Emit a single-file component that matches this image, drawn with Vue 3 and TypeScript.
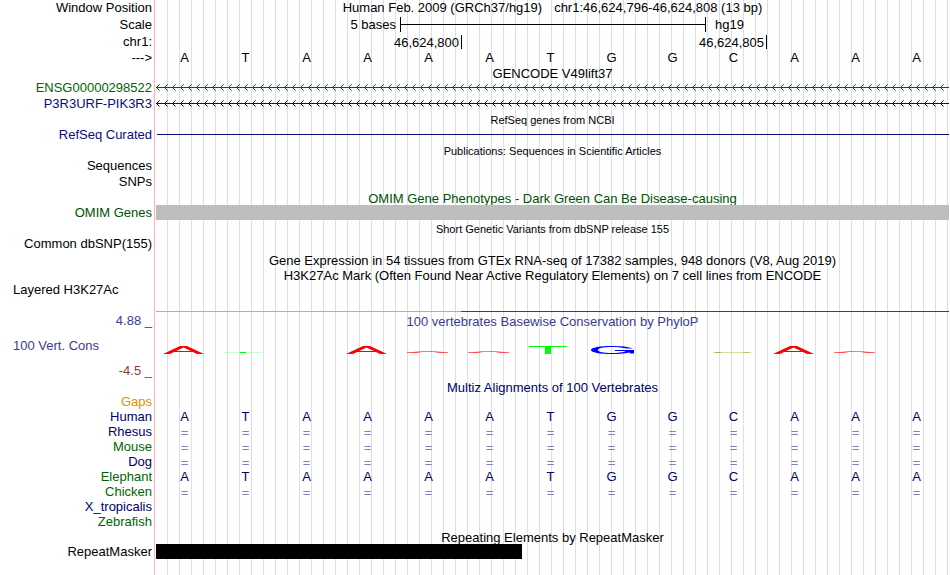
<script setup lang="ts">
type Glyph = 'tall-a' | 'low-a' | 'flat-t' | 'tall-t' | 'tall-g' | 'flat-c' | ''

interface Row {
  kind: 'title' | 'empty' | 'gene' | 'line' | 'bar' | 'bases' | 'logo' | 'divider' | 'repeat'
  size: string
  label?: string
  tone?: string
  left?: boolean
  text?: string
  small?: boolean
  bases?: string
}

const sequence = 'ATAAAATGGCAAA'
const same = '============='

const rows: Row[] = [
  { kind: 'bases', size: 'h15', label: '--->', bases: sequence },
  { kind: 'title', size: 'h15', text: 'GENCODE V49lift37' },
  { kind: 'gene', size: 'h16', label: 'ENSG00000298522', tone: 'green' },
  { kind: 'gene', size: 'h16', label: 'P3R3URF-PIK3R3', tone: 'navy' },
  { kind: 'title', size: 'h15', text: 'RefSeq genes from NCBI', small: true },
  { kind: 'line', size: 'h16', label: 'RefSeq Curated', tone: 'navy' },
  { kind: 'title', size: 'h15', text: 'Publications: Sequences in Scientific Articles', small: true },
  { kind: 'empty', size: 'h16', label: 'Sequences' },
  { kind: 'empty', size: 'h16', label: 'SNPs' },
  { kind: 'title', size: 'h15', text: 'OMIM Gene Phenotypes - Dark Green Can Be Disease-causing', tone: 'forest' },
  { kind: 'bar', size: 'h15', label: 'OMIM Genes', tone: 'forest' },
  { kind: 'title', size: 'h16', text: 'Short Genetic Variants from dbSNP release 155', small: true },
  { kind: 'empty', size: 'h16', label: 'Common dbSNP(155)' },
  { kind: 'title', size: 'h15', text: 'Gene Expression in 54 tissues from GTEx RNA-seq of 17382 samples, 948 donors (V8, Aug 2019)' },
  { kind: 'title', size: 'h15', text: 'H3K27Ac Mark (Often Found Near Active Regulatory Elements) on 7 cell lines from ENCODE' },
  { kind: 'empty', size: 'h15', label: 'Layered H3K27Ac', left: true },
  { kind: 'divider', size: 'h16' },
  { kind: 'title', size: 'h16', label: '4.88 _', tone: 'slate', text: '100 vertebrates Basewise Conservation by PhyloP' },
  { kind: 'logo', size: 'h25', label: '100 Vert. Cons', tone: 'slate', left: true },
  { kind: 'empty', size: 'h25', label: '-4.5 _', tone: 'maroon' },
  { kind: 'title', size: 'h15', text: 'Multiz Alignments of 100 Vertebrates', tone: 'deep' },
  { kind: 'empty', size: 'h15', label: 'Gaps', tone: 'orange' },
  { kind: 'bases', size: 'h15', label: 'Human', tone: 'deep', bases: sequence },
  { kind: 'bases', size: 'h15', label: 'Rhesus', tone: 'deep', bases: same },
  { kind: 'bases', size: 'h15', label: 'Mouse', tone: 'leaf', bases: same },
  { kind: 'bases', size: 'h15', label: 'Dog', tone: 'deep', bases: same },
  { kind: 'bases', size: 'h15', label: 'Elephant', tone: 'leaf', bases: sequence },
  { kind: 'bases', size: 'h15', label: 'Chicken', tone: 'leaf', bases: same },
  { kind: 'empty', size: 'h15', label: 'X_tropicalis', tone: 'deep' },
  { kind: 'empty', size: 'h15', label: 'Zebrafish', tone: 'leaf' },
  { kind: 'title', size: 'h15', text: 'Repeating Elements by RepeatMasker' },
  { kind: 'repeat', size: 'h15', label: 'RepeatMasker' },
]

const logo: Glyph[] = [
  'tall-a', 'flat-t', '', 'tall-a', 'low-a', 'low-a', 'tall-t', 'tall-g', '', 'flat-c', 'tall-a', 'low-a', '',
]
</script>

<template>
  <main class="browser">
    <div class="row h16">
      <span class="label">Window Position</span>
      <div class="title position">
        <span>Human Feb. 2009 (GRCh37/hg19)</span>
        <span>chr1:46,624,796-46,624,808 (13 bp)</span>
      </div>
    </div>
    <div class="row h17">
      <span class="label">Scale</span>
      <div class="columns">
        <span class="scale-text">5 bases</span>
        <span class="scale-bar"></span>
        <span class="assembly">hg19</span>
      </div>
    </div>
    <div class="row h17">
      <span class="label">chr1:</span>
      <div class="columns">
        <span class="mark first">46,624,800</span>
        <span class="mark">46,624,805</span>
      </div>
    </div>

    <div v-for="(row, i) in rows" :key="i" class="row" :class="row.size">
      <span class="label" :class="[row.tone, { left: row.left }]">{{ row.label }}</span>

      <div v-if="row.kind === 'title'" class="title" :class="[row.tone, { small: row.small }]">{{ row.text }}</div>

      <svg v-else-if="row.kind === 'gene'" class="gene" :class="row.tone" width="100%" height="7" aria-hidden="true">
        <defs>
          <pattern :id="`strand-${i}`" width="8" height="7" patternUnits="userSpaceOnUse">
            <path
              d="M0 3h1v1h-1zM1 2h1v1h-1zM1 4h1v1h-1zM2 1h1v1h-1zM2 5h1v1h-1z"
              fill="currentColor"
            />
            <path d="M3 0h1v1h-1zM3 6h1v1h-1z" fill="currentColor" opacity="0.6" />
          </pattern>
        </defs>
        <rect width="100%" height="7" :fill="`url(#strand-${i})`" />
        <rect y="3" width="100%" height="1" fill="currentColor" />
      </svg>

      <div v-else-if="row.kind === 'line'" class="thin-line"></div>
      <div v-else-if="row.kind === 'bar'" class="bar"></div>
      <div v-else-if="row.kind === 'divider'" class="divider"></div>

      <div v-else-if="row.kind === 'bases'" class="columns bases" :class="{ aligned: row.tone }">
        <span v-for="(base, b) in row.bases" :key="b" :class="{ match: base === '=' }">{{ base }}</span>
      </div>

      <div v-else-if="row.kind === 'logo'" class="columns logo">
        <svg v-for="(glyph, g) in logo" :key="g" viewBox="0 0 60 8" width="60" height="8" aria-hidden="true">
          <g v-if="glyph === 'tall-a'" fill="#f00">
            <path d="M6 8L23 0H30L47 8H40L26.500 1.500L13 8Z" />
            <rect x="16" y="5" width="21" height="1" />
          </g>
          <g v-else-if="glyph === 'low-a'" fill="#f00">
            <path d="M6 6.3L12 6L20 5.2H34L42 6L47 6.3V7H38L33 6H21L16 7H6Z" opacity="0.7" />
          </g>
          <g v-else-if="glyph === 'flat-t'" fill="#0f0">
            <rect x="6" y="6" width="38" height="1" opacity="0.2" />
            <rect x="22" y="6" width="6" height="1" />
          </g>
          <g v-else-if="glyph === 'tall-t'" fill="#0f0">
            <rect x="6" y="0" width="38" height="1" />
            <rect x="22" y="0" width="6" height="8" />
          </g>
          <g v-else-if="glyph === 'tall-g'" fill="#00f">
            <path d="M49 2.600C45 .8 37 0 28 0C16 0 7 1.500 7 4S16 8 28 8C37 8 42 7.400 46 6.500V7.600H50V4H31V5H42C39 6.500 34 7 28 7C19 7 14 6 14 4S19 1 28 1C34 1 39 1.500 43 2.600Z" />
          </g>
          <g v-else-if="glyph === 'flat-c'" fill="#990">
            <rect x="7" y="6" width="38" height="1" opacity="0.35" />
            <rect x="9" y="6" width="6" height="1" opacity="0.6" />
            <rect x="37" y="6" width="6" height="1" opacity="0.4" />
          </g>
        </svg>
      </div>

      <div v-else-if="row.kind === 'repeat'" class="columns">
        <span class="repeat"></span>
      </div>
    </div>
  </main>
</template>

<style>
body {
  margin: 0;
  background: #fff;
}
</style>

<style scoped>
.browser {
  box-sizing: border-box;
  min-height: 100vh;
  padding: 0 1px 16px 0;
  font-family: "Liberation Sans", Arial, sans-serif;
  font-size: 13px;
  color: #000;
  background:
    linear-gradient(#ffb4b4, #ffb4b4) 154px 0 / 1px 100% no-repeat,
    linear-gradient(#fff, #fff) 0 0 / 156px 100% no-repeat,
    linear-gradient(to right, transparent 11px, #dcdcf8 11px) 0 0 / 12px 100% repeat-x;
}

.row {
  display: grid;
  grid-template-columns: 152px minmax(0, 1fr);
  column-gap: 4px;
  white-space: nowrap;
}

.h15 { height: 15px; line-height: 15px; }
.h16 { height: 16px; line-height: 16px; }
.h17 { height: 17px; line-height: 17px; }
.h25 { height: 25px; line-height: 33px; }

.label {
  text-align: right;
}

.label.left {
  padding-left: 13px;
  text-align: left;
}

.title {
  padding-top: 1px;
  text-align: center;
}

.title.small {
  font-size: 11px;
}

.position {
  display: flex;
  justify-content: center;
  gap: 12px;
  padding-top: 0;
}

.columns {
  display: grid;
  grid-template-columns: repeat(13, minmax(0, 1fr));
}

.scale-text {
  grid-column: 1 / 5;
  padding-right: 4px;
  text-align: right;
}

.scale-bar {
  grid-column: 5 / 10;
  height: 15px;
  margin: 1px -1px 0 0;
  border: solid #000;
  border-width: 0 1px;
  background: linear-gradient(#000, #000) 0 7px / 100% 1px no-repeat;
}

.assembly {
  grid-column: 10 / 14;
  padding-left: 10px;
}

.mark {
  grid-column: 6 / 11;
  height: 14px;
  margin: 2px -1px 0 0;
  padding-right: 2px;
  border-right: 1px solid #000;
  line-height: 15px;
  text-align: right;
}

.mark.first {
  grid-column: 1 / 6;
}

.bases {
  margin: 0 2px 0 -2px;
  text-align: center;
}

.aligned {
  color: #000064;
}

.match {
  padding-top: 1px;
  color: #8080b4;
}

.gene {
  display: block;
  margin-top: 4px;
  shape-rendering: crispEdges;
}

.thin-line {
  height: 1px;
  margin: 7px 0 0 1px;
  background: #0c0c78;
}

.bar {
  z-index: 1;
  background: #bebebe;
}

.divider {
  height: 1px;
  margin-top: 14px;
  background: linear-gradient(to right, #ff82c8 38.5%, #5a1ebe 38.5%);
}

.logo {
  justify-items: end;
  padding-top: 17px;
  line-height: 0;
}

.repeat {
  z-index: 1;
  grid-column: 1 / 7;
  background: #000;
}

.green { color: #006400; }
.forest { color: #005000; }
.leaf { color: #006400; }
.navy { color: #0c0c78; }
.deep { color: #000064; }
.slate { color: #3c3c8c; }
.maroon { color: #8c3c3c; }
.orange { color: #e68c00; }
</style>
